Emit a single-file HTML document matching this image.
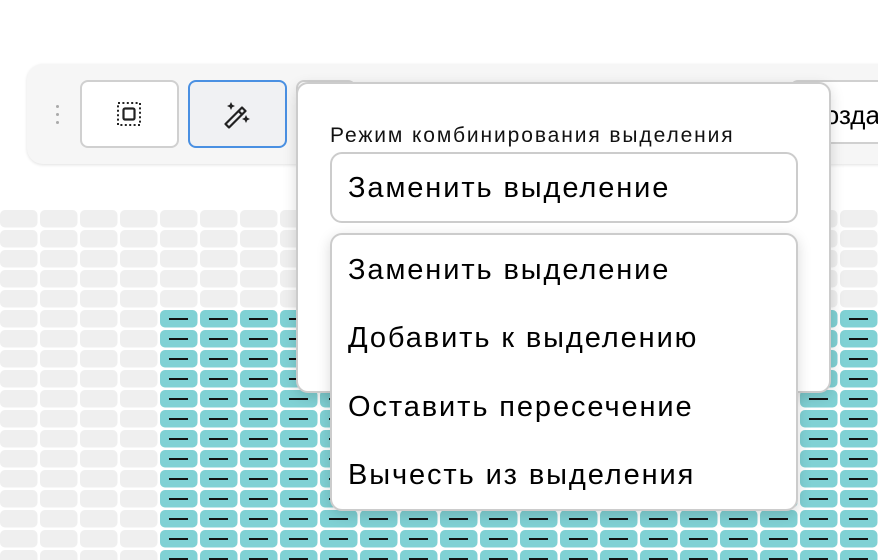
<!DOCTYPE html>
<html><head><meta charset="utf-8"><style>
body{margin:0;width:878px;height:560px;overflow:hidden;background:#fff;font-family:"Liberation Sans","DejaVu Sans",sans-serif;position:relative}
.abs{position:absolute;box-sizing:border-box}
.tb{left:27px;top:64px;width:900px;height:100px;background:#f6f6f6;border-radius:16px;box-shadow:0 1px 3px rgba(0,0,0,.12)}
.btn{background:#fff;border:2px solid #d0d0d0;border-radius:8px;height:68px;top:80px}
.pop{left:296px;top:82px;width:535px;height:311px;background:#fff;border:2px solid #ccc;border-radius:12px;box-shadow:0 4px 14px rgba(0,0,0,.15)}
.sel{left:330px;top:152px;width:468px;height:71px;border:2px solid #ccc;border-radius:12px;background:#fff;font-size:29px;letter-spacing:1.9px;padding:18px 0 0 16px}
.list{left:330px;top:233px;width:468px;height:278px;border:2px solid #ccc;border-radius:12px;background:#fff;box-shadow:0 4px 14px rgba(0,0,0,.15)}
.it{position:absolute;left:16px;font-size:29px;letter-spacing:1.9px;color:#000;white-space:nowrap}
</style></head><body>
<svg class="abs" style="left:0;top:0" width="878" height="560">
<defs>
<pattern id="g" x="0" y="210" width="40" height="20" patternUnits="userSpaceOnUse"><rect x="0" y="0" width="37.5" height="17.5" rx="5" fill="#efefef"/></pattern>
<pattern id="t" x="0" y="310" width="40" height="20" patternUnits="userSpaceOnUse"><rect x="0" y="0" width="37.5" height="17.5" rx="5" fill="#80d1d4"/><rect x="9" y="8" width="19" height="2" fill="#111"/></pattern>
</defs>
<rect x="0" y="210" width="878" height="350" fill="url(#g)"/>
<rect x="160" y="310" width="718" height="250" fill="url(#t)"/>
</svg>
<div class="abs tb"></div>
<div class="abs" style="left:56px;top:105px;width:3px;height:3px;border-radius:50%;background:#aaa;box-shadow:0 8px 0 #aaa,0 16px 0 #aaa"></div>
<div class="abs btn" style="left:80px;width:99px"></div>
<svg class="abs" style="left:116px;top:101px" width="26" height="26" viewBox="0 0 26 26">
<rect x="2" y="2" width="22" height="22" fill="none" stroke="#222" stroke-width="2" stroke-dasharray="2 2.4"/>
<rect x="7.5" y="7.5" width="11" height="11" rx="1.5" fill="none" stroke="#222" stroke-width="2.2"/>
</svg>
<div class="abs btn" style="left:188px;width:99px;border-color:#4a90e2;background:#f0f1f3"></div>
<svg class="abs" style="left:222px;top:100px" width="30" height="30" viewBox="0 0 30 30">
<path d="M3.5 24 L20 7.5 L23.5 11 L7 27.5 Z" fill="none" stroke="#222" stroke-width="2.2" stroke-linejoin="round"/>
<path d="M16.5 11 L20 14.5" stroke="#222" stroke-width="2.2"/>
<path d="M9 2 l1.3 2.7 2.7 1.3 -2.7 1.3 -1.3 2.7 -1.3 -2.7 -2.7 -1.3 2.7 -1.3z M24 15 l1.3 2.7 2.7 1.3 -2.7 1.3 -1.3 2.7 -1.3 -2.7 -2.7 -1.3 2.7 -1.3z" fill="#222"/>
</svg>
<div class="abs btn" style="left:296px;width:60px"></div>
<div class="abs btn" style="left:790px;width:200px;height:64px;font-size:26px;padding:18px 0 0 14px">Создать</div>
<div class="abs pop"></div>
<div class="abs" style="left:330px;top:124px;font-size:21px;letter-spacing:1.9px;color:#111;white-space:nowrap">Режим комбинирования выделения</div>
<div class="abs sel">Заменить выделение</div>
<div class="abs list">
<div class="it" style="top:19px">Заменить выделение</div>
<div class="it" style="top:87px">Добавить к выделению</div>
<div class="it" style="top:156px">Оставить пересечение</div>
<div class="it" style="top:224px">Вычесть из выделения</div>
</div>
</body></html>
